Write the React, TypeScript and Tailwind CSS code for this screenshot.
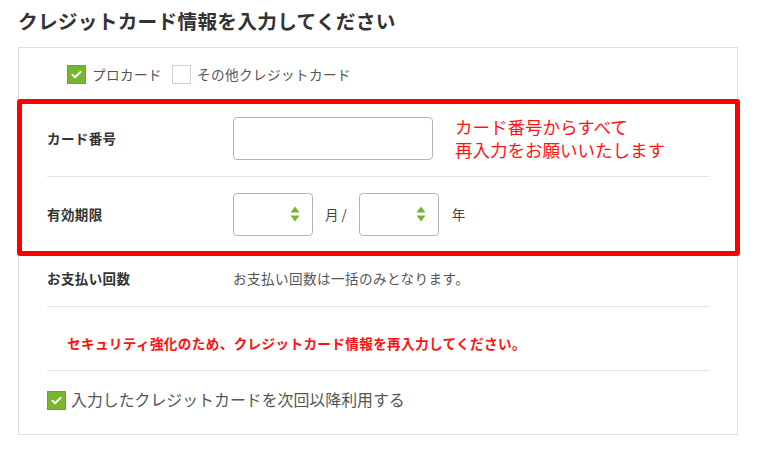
import React from 'react'

const jp = { fontFamily: '"Noto Sans CJK JP", "Noto Sans", sans-serif' }

function CheckBox({ checked }: { checked?: boolean }) {
    if (!checked) {
        return <span className="block w-[19px] h-[19px] border border-[#cfcfcf] bg-white" />
    }
    return (
        <span className="flex items-center justify-center w-[19px] h-[19px] bg-[#78b62f] border border-[#6aa526]">
            <svg viewBox="0 0 16 16" className="w-[13px] h-[13px]" aria-hidden="true">
                <path d="M3 8.3l3.2 3L13 4.8" fill="none" stroke="#fff" strokeWidth="2.4" strokeLinecap="round" strokeLinejoin="round" />
            </svg>
        </span>
    )
}

function SelectBox() {
    return (
        <div className="relative w-[80px] h-[43px] rounded-[4px] border border-[#b5b5b5] bg-white">
            <svg viewBox="0 0 10 16" className="absolute right-[12px] top-[12px] w-[10px] h-[16px]" aria-hidden="true">
                <path d="M5 0.5L9.5 6.5H0.5Z" fill="#73b52c" />
                <path d="M5 15.5L9.5 9.5H0.5Z" fill="#73b52c" />
            </svg>
        </div>
    )
}

export default function App() {
    return (
        <div className="bg-white w-[760px] h-[450px] px-[18px] pt-[7px] text-[#333]" style={jp}>
            <h1 className="text-[19.7px] leading-[28px] font-bold text-[#333] tracking-[0.25px]">
                クレジットカード情報を入力してください
            </h1>

            <div className="relative mt-[12px] w-[720px] border border-[#dedede] bg-white">
                {/* Card type */}
                <div className="h-[52px] flex items-center pl-[48px] text-[13.6px] text-[#555] tracking-[0.4px]">
                    <CheckBox checked />
                    <span className="ml-[6px]">プロカード</span>
                    <span className="ml-[10px]">
                        <CheckBox />
                    </span>
                    <span className="ml-[6px]">その他クレジットカード</span>
                </div>

                <div className="px-[28px]">
                    {/* Card number */}
                    <div className="h-[77px] flex items-center border-b border-[#e3e3e3]">
                        <div className="w-[186px] text-[13.5px] font-bold text-[#333] tracking-[0.4px]">カード番号</div>
                        <div className="w-[200px] h-[43px] rounded-[4px] border border-[#b5b5b5] bg-white" />
                        <div className="ml-[22px] text-[17.5px] leading-[23px] text-[#ff1414]">
                            <p>カード番号からすべて</p>
                            <p>再入力をお願いいたします</p>
                        </div>
                    </div>

                    {/* Expiry */}
                    <div className="h-[75px] flex items-center">
                        <div className="w-[186px] text-[13.5px] font-bold text-[#333] tracking-[0.4px]">有効期限</div>
                        <SelectBox />
                        <span className="ml-[12px] mr-[12px] text-[13.5px] text-[#444]">月 /</span>
                        <SelectBox />
                        <span className="ml-[13px] text-[13.5px] text-[#444]">年</span>
                    </div>

                    {/* Payment count */}
                    <div className="h-[55px] flex items-center border-b border-[#e3e3e3] pb-[1px]">
                        <div className="w-[186px] text-[13.5px] font-bold text-[#333] tracking-[0.4px]">お支払い回数</div>
                        <div className="text-[13.6px] text-[#555] tracking-[0.4px]">お支払い回数は一括のみとなります。</div>
                    </div>

                    {/* Notice */}
                    <div className="h-[64px] pt-[26px] pl-[20px] border-b border-[#e3e3e3]">
                        <p className="text-[13.6px] leading-[20px] font-bold text-[#ff1010] tracking-[0.36px]">
                            セキュリティ強化のため、クレジットカード情報を再入力してください。
                        </p>
                    </div>

                    {/* Save card */}
                    <div className="h-[63px] flex items-start pt-[20px]">
                        <CheckBox checked />
                        <span className="ml-[5px] -mt-[3px] text-[15.9px] leading-[24px] text-[#555]">
                            入力したクレジットカードを次回以降利用する
                        </span>
                    </div>
                </div>

                {/* Annotation frame */}
                <div className="absolute left-[-2px] top-[51px] w-[723px] h-[157px] border-[5px] border-[#ff0000] rounded-[3px] pointer-events-none" />
            </div>
        </div>
    )
}
